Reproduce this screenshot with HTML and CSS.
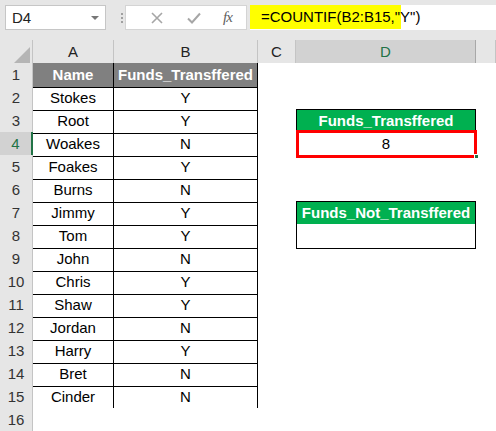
FILE: index.html
```html
<!DOCTYPE html>
<html>
<head>
<meta charset="utf-8">
<link rel="stylesheet" href="styles.css">
</head>
<body>
<div class="app">
  <div class="toolbar">
    <div class="namebox"><span class="nb-text">D4</span><span class="caret"></span></div>
    <div class="dots"><i></i><i></i><i></i></div>
    <div class="fxbox">
      <svg class="ico" width="12" height="12" viewBox="0 0 12 12"><path d="M1 1 L11 11 M11 1 L1 11" stroke="#a6a6a6" stroke-width="1.6" fill="none"/></svg>
      <svg class="ico" width="14" height="12" viewBox="0 0 14 12"><path d="M1 6.5 L5 10.5 L13 1.5" stroke="#a6a6a6" stroke-width="2" fill="none"/></svg>
      <span class="fx">fx</span>
    </div>
    <div class="formula"><span class="hl">=COUNTIF(B2:B15,"Y")</span></div>
  </div>
  <div class="sheet">
    <div class="r hdr">
      <div class="corner"><span class="tri"></span></div>
      <div class="ch">A</div><div class="ch">B</div><div class="ch">C</div><div class="ch sel">D</div><div class="ch"></div>
    </div>
    <div class="r"><div class="rh">1</div><div class="t th">Name</div><div class="t th">Funds_Transffered</div><div class="c"></div><div class="c"></div><div class="c"></div></div>
    <div class="r"><div class="rh">2</div><div class="t">Stokes</div><div class="t">Y</div><div class="c"></div><div class="c"></div><div class="c"></div></div>
    <div class="r"><div class="rh">3</div><div class="t">Root</div><div class="t">Y</div><div class="c"></div><div class="d dh">Funds_Transffered</div><div class="c"></div></div>
    <div class="r"><div class="rh sel">4</div><div class="t">Woakes</div><div class="t">N</div><div class="c"></div><div class="d dv">8<span class="redbox"></span><span class="handle"></span></div><div class="c"></div></div>
    <div class="r"><div class="rh">5</div><div class="t">Foakes</div><div class="t">Y</div><div class="c"></div><div class="c"></div><div class="c"></div></div>
    <div class="r"><div class="rh">6</div><div class="t">Burns</div><div class="t">N</div><div class="c"></div><div class="c"></div><div class="c"></div></div>
    <div class="r"><div class="rh">7</div><div class="t">Jimmy</div><div class="t">Y</div><div class="c"></div><div class="d dh">Funds_Not_Transffered</div><div class="c"></div></div>
    <div class="r"><div class="rh">8</div><div class="t">Tom</div><div class="t">Y</div><div class="c"></div><div class="d dv"></div><div class="c"></div></div>
    <div class="r"><div class="rh">9</div><div class="t">John</div><div class="t">N</div><div class="c"></div><div class="c"></div><div class="c"></div></div>
    <div class="r"><div class="rh">10</div><div class="t">Chris</div><div class="t">Y</div><div class="c"></div><div class="c"></div><div class="c"></div></div>
    <div class="r"><div class="rh">11</div><div class="t">Shaw</div><div class="t">Y</div><div class="c"></div><div class="c"></div><div class="c"></div></div>
    <div class="r"><div class="rh">12</div><div class="t">Jordan</div><div class="t">N</div><div class="c"></div><div class="c"></div><div class="c"></div></div>
    <div class="r"><div class="rh">13</div><div class="t">Harry</div><div class="t">Y</div><div class="c"></div><div class="c"></div><div class="c"></div></div>
    <div class="r"><div class="rh">14</div><div class="t">Bret</div><div class="t">N</div><div class="c"></div><div class="c"></div><div class="c"></div></div>
    <div class="r"><div class="rh">15</div><div class="t">Cinder</div><div class="t">N</div><div class="c"></div><div class="c"></div><div class="c"></div></div>
    <div class="r"><div class="rh">16</div><div class="c"></div><div class="c"></div><div class="c"></div><div class="c"></div><div class="c"></div></div>
  </div>
</div>
</body>
</html>
```

FILE: styles.css
```css
* { box-sizing: border-box; }
html, body { margin: 0; padding: 0; }
body {
  width: 496px;
  height: 431px;
  overflow: hidden;
  background: #e6e6e6;
  font-family: "Liberation Sans", Arial, sans-serif;
  font-size: 15px;
  color: #000;
}
.app { display: flex; flex-direction: column; }

/* toolbar */
.toolbar {
  height: 40px;
  display: flex;
  align-items: flex-start;
  padding-top: 5px;
  padding-left: 5px;
}
.namebox {
  width: 101px;
  height: 25px;
  background: #fff;
  border: 1px solid #c6c6c6;
  display: flex;
  align-items: center;
  justify-content: space-between;
  padding: 0 6px 0 6px;
}
.nb-text { font-size: 15px; color: #222; }
.caret {
  width: 0; height: 0;
  border-left: 4px solid transparent;
  border-right: 4px solid transparent;
  border-top: 4px solid #777;
}
.dots {
  width: 19px;
  height: 25px;
  display: flex;
  flex-direction: column;
  align-items: flex-end;
  justify-content: center;
  padding-right: 2px;
  gap: 2px;
}
.dots i { display: block; width: 2px; height: 2px; background: #a0a0a0; }
.fxbox {
  width: 122px;
  height: 25px;
  background: #fff;
  border: 1px solid #d4d4d4;
  display: flex;
  align-items: center;
  padding-left: 25px;
  gap: 24px;
}
.ico { display: block; }
.fx {
  font-family: "Liberation Serif", "Times New Roman", serif;
  font-style: italic;
  font-size: 15px;
  color: #606060;
  letter-spacing: -1px;
  margin-left: -2px;
}
.formula {
  flex: 1;
  height: 25px;
  margin-left: 3px;
  background: #fff;
  display: flex;
}
.hl {
  background: #ffff00;
  height: 24px;
  line-height: 24px;
  padding: 0 4px 0 11px;
  width: 151px;
  font-size: 15px;
  white-space: nowrap;
}

/* sheet */
.sheet { display: flex; flex-direction: column; background: #fff; }
.r {
  display: grid;
  grid-template-columns: 33px 81px 144px 38px 180px 20px;
  height: 23px;
}
.hdr { background: #e6e6e6; }
.corner {
  position: relative;
  border-right: 1px solid #c4c4c4;
}
.tri {
  position: absolute;
  right: 2px;
  bottom: 2px;
  width: 0; height: 0;
  border-left: 16px solid transparent;
  border-bottom: 16px solid #b5b5b5;
}
.ch {
  border-right: 1px solid #c4c4c4;
  text-align: center;
  line-height: 23px;
  color: #222;
}
.ch.sel {
  background: #d2d2d2;
  color: #217346;
  border-bottom: 2px solid #217346;
  border-right-color: #a8a8a8;
}
.rh {
  background: #e6e6e6;
  border-right: 1px solid #c4c4c4;
  border-bottom: 1px solid #d6d6d6;
  text-align: center;
  line-height: 24px;
  color: #333;
}
.rh.sel {
  background: #d2d2d2;
  color: #217346;
  border-right: 2px solid #217346;
}
.c { background: #fff; }
.t {
  border-right: 1px solid #000;
  border-bottom: 1px solid #000;
  text-align: center;
  line-height: 24px;
  white-space: nowrap;
}
.th {
  background: #808080;
  color: #fff;
  font-weight: bold;
}
.d {
  position: relative;
  border-left: 1px solid #000;
  border-right: 1px solid #000;
  border-bottom: 1px solid #000;
  text-align: center;
  line-height: 23px;
  white-space: nowrap;
}
.dh {
  background: #00b050;
  color: #fff;
  font-weight: bold;
  border-top: 1px solid #000;
  line-height: 22px;
}
.dv { background: #fff; }
.redbox {
  position: absolute;
  left: -1px;
  right: -2px;
  top: -2px;
  bottom: -2px;
  border: 3px solid #ff0000;
}
.handle {
  position: absolute;
  right: -4px;
  bottom: -3px;
  width: 5px;
  height: 5px;
  background: #217346;
  border: 1px solid #fff;
}
```
